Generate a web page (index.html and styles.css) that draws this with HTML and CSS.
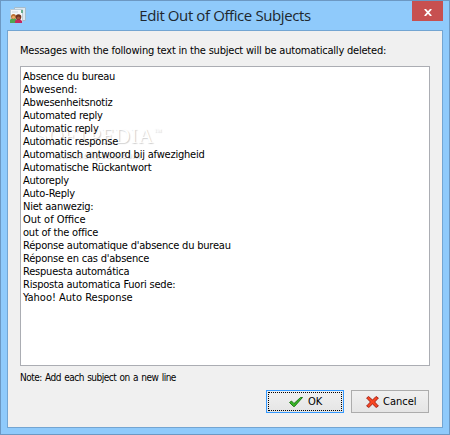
FILE: index.html
```html
<!DOCTYPE html>
<html lang="en">
<head>
<meta charset="utf-8">
<title>Edit Out of Office Subjects</title>
<link rel="stylesheet" href="styles.css">
</head>
<body>
<div class="window">
  <header class="titlebar">
    <svg class="app-icon" viewBox="0 0 16 16">
      <path d="M4.5.5h11v13h-11z" fill="#dce8f0" stroke="#a4bccd"/>
      <path d="M.5 2.5h12v12H.5z" fill="#f5f8fa" stroke="#bacbd7"/>
      <path d="M2 5h6" stroke="#ccd7df"/>
      <path d="M11 3h2v3h-2z" fill="#68ad91"/>
      <path d="M0 16v-3l2-2h3l2 2v3z" fill="#4fa751"/>
      <path d="M5 16v-2l2-2h3l2 2v2z" fill="#c4285f"/>
      <circle cx="3.5" cy="9.5" r="2.5" fill="#b96d30"/>
      <circle cx="3.5" cy="10.3" r="1.5" fill="#eeaa65"/>
      <circle cx="8.5" cy="10" r="2.8" fill="#71331f"/>
      <circle cx="8.5" cy="11" r="1.6" fill="#a65739"/>
    </svg>
    <h1>Edit Out of Office Subjects</h1>
    <button class="close" aria-label="Close"><svg viewBox="0 0 8 7"><path d="M.8 0 7.2 7M7.2 0 .8 7" stroke="#fff" stroke-width="1.8"/></svg></button>
  </header>
  <main class="client">
    <p class="prompt">Messages with the following text in the subject will be automatically deleted:</p>
    <div class="subjects">
      <div class="watermark"><b>SOFTPEDIA<sup>™</sup></b><span>www.softpedia.com</span></div>
      <ul>
        <li>Absence du bureau</li>
        <li class="wide">Abwesend:</li>
        <li>Abwesenheitsnotiz</li>
        <li>Automated reply</li>
        <li>Automatic reply</li>
        <li>Automatic response</li>
        <li>Automatisch antwoord bij afwezigheid</li>
        <li>Automatische Rückantwort</li>
        <li>Autoreply</li>
        <li>Auto-Reply</li>
        <li>Niet aanwezig:</li>
        <li class="wide">Out of Office</li>
        <li>out of the office</li>
        <li>Réponse automatique d'absence du bureau</li>
        <li>Réponse en cas d'absence</li>
        <li>Respuesta automática</li>
        <li>Risposta automatica Fuori sede:</li>
        <li class="wide">Yahoo! Auto Response</li>
      </ul>
    </div>
    <p class="note">Note: Add each subject on a new line</p>
    <div class="actions">
      <button class="button ok"><svg class="check" viewBox="0 0 14 10"><path d="M.5 5.5 2.5 4 5 6.5 11.5.5h2L5.5 9.5h-1z" fill="#37b526" stroke="#16730f" stroke-width=".9"/></svg><span>OK</span></button>
      <button class="button cancel"><svg class="cross" viewBox="0 0 13 12"><path d="M.6 2 2.6.5 6.5 4 10 .5 12.4 2 8.7 6l3.7 4-2.2 1.5-3.7-3.6-3.7 3.6L.6 10l3.8-4z" fill="#f94620" stroke="#9e1c14" stroke-width=".9"/></svg><span>Cancel</span></button>
    </div>
  </main>
</div>
</body>
</html>
```
FILE: styles.css
```css
* { box-sizing: border-box; }
body { margin: 0; font: 11px/13px "DejaVu Sans Condensed", "DejaVu Sans", sans-serif; font-stretch: condensed; letter-spacing: -.21px; color: #000; }
h1, p, ul { margin: 0; padding: 0; font-weight: normal; }
.window { width: 450px; height: 435px; background: #8fcafb; border: 1px solid #6c98c3; padding: 0 6px 6px; display: flex; flex-direction: column; }
.titlebar { height: 29px; flex: none; display: grid; grid-template-columns: 31px 1fr 31px; }
.app-icon { width: 16px; height: 16px; margin: 6px 0 0 3px; }
h1 { font: 15px/29px "Open Sans", sans-serif; letter-spacing: -.4px; text-align: center; color: #20272e; white-space: nowrap; }
button { font: inherit; padding: 0; color: inherit; letter-spacing: 0; }
.close { width: 31px; height: 20px; border: 0; background: #c75050; display: flex; align-items: center; justify-content: center; }
.close svg { width: 8px; height: 7px; margin-top: 2px; }
.client { width: 436px; height: 398px; background: #f0f0f0; border: 1px solid #73a5d2; padding: 13px 12px 0; }
.prompt { height: 22px; white-space: nowrap; }
.subjects { position: relative; width: 410px; height: 300px; background: #fff; border: 1px solid #abadb3; padding: 3px 2px; }
.subjects ul { list-style: none; position: relative; }
.subjects li { height: 13px; white-space: nowrap; }
.subjects .wide { letter-spacing: 0; }
.watermark { position: absolute; left: 15px; top: 58px; color: #fff; text-shadow: 1px 1px 1px #d0d0d0; }
.watermark b { display: block; font: 21px/22px "Liberation Serif", serif; letter-spacing: .5px; white-space: nowrap; }
.watermark sup { font-size: 8px; line-height: 0; vertical-align: 9px; }
.watermark span { display: block; padding-left: 18px; font: bold 9px/16px "Liberation Sans", sans-serif; letter-spacing: .1px; }
.note { margin-top: 5px; height: 19px; font-size: 10px; letter-spacing: -.52px; word-spacing: 1px; white-space: nowrap; }
.actions { display: flex; gap: 7px; justify-content: flex-end; padding-right: 1px; }
.button { width: 78px; height: 23px; display: flex; align-items: center; border: 1px solid #acacac; background: linear-gradient(#f0f0f0, #e5e5e5); }
.ok { border-color: #3399ff; outline: 1px dotted #000; outline-offset: -3px; }
.check { width: 14px; height: 10px; margin: 1px 5px 0 22px; }
.cross { width: 13px; height: 12px; margin: 0 4px 0 14px; }
```
